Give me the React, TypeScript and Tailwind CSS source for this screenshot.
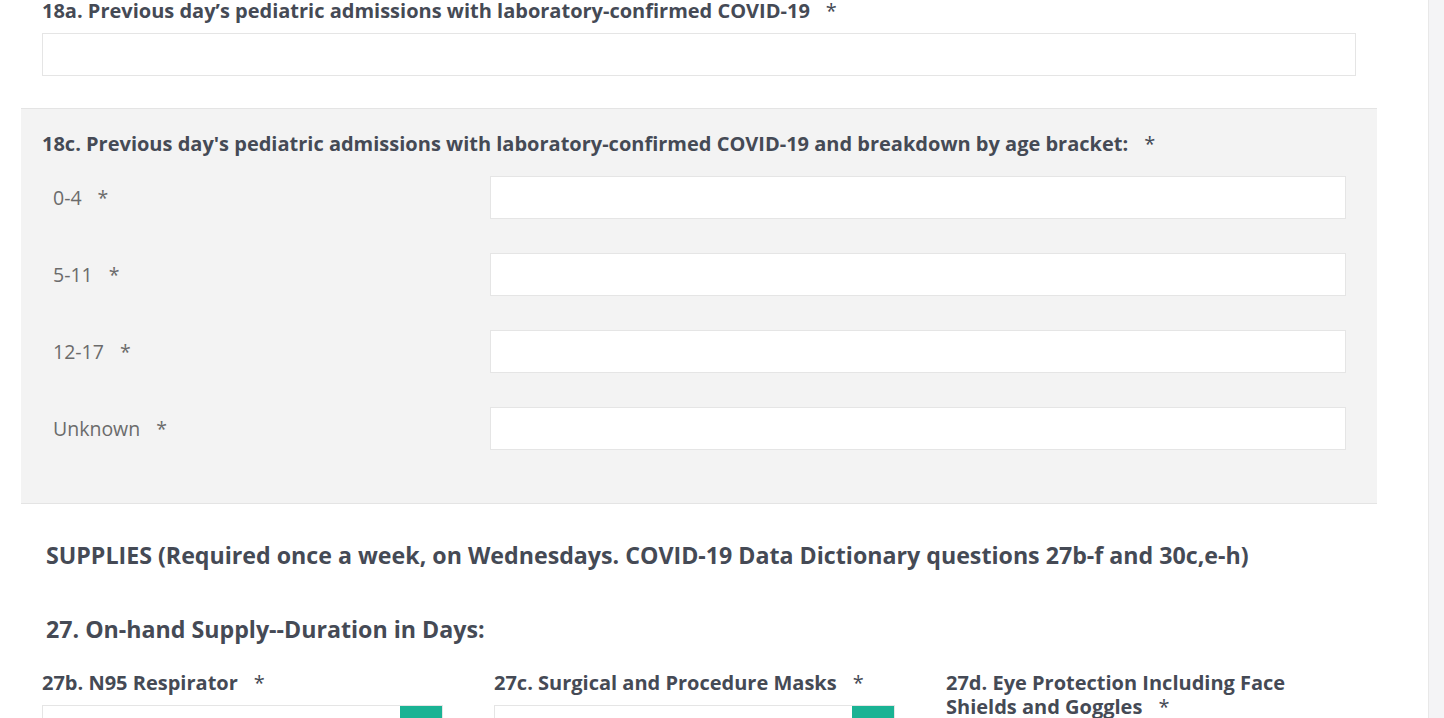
const ageRows = ['0-4', '5-11', '12-17', 'Unknown']

const supplyFields = [
  { id: '27b', label: '27b. N95 Respirator' },
  { id: '27c', label: '27c. Surgical and Procedure Masks' },
  { id: '27d', label: '27d. Eye Protection Including Face Shields and Goggles' },
]

function Req() {
  return <span className="ml-[16px] font-normal">*</span>
}

export default function App() {
  return (
    <div className="flex h-[718px] overflow-hidden bg-white font-['Open_Sans',sans-serif] text-[#454a55]">
      <div className="flex-1 pl-[21px] pr-[51px]">
        {/* 18a */}
        <div className="-mt-px pl-[21px] pr-[21px]">
          <label className="block text-[20px] font-bold leading-[24px]">
            18a. Previous day’s pediatric admissions with laboratory-confirmed COVID-19
            <Req />
          </label>
          <div className="mt-[10px] h-[43px] border border-[#e5e5e5] bg-white" />
        </div>

        {/* 18c gray block */}
        <div className="mt-[32px] h-[396px] border-y border-[#e4e4e4] bg-[#f3f3f3] pl-[21px] pr-[31px] pt-[22px]">
          <label className="block text-[20px] font-bold leading-[26px]">
            18c. Previous day's pediatric admissions with laboratory-confirmed COVID-19 and breakdown by age bracket:
            <Req />
          </label>
          <div className="mt-[19px] flex flex-col gap-[34px]">
            {ageRows.map((r) => (
              <div key={r} className="flex items-center">
                <div className="w-[448px] pl-[11px] text-[19.5px] text-[#6b6b6b]">
                  {r}
                  <span className="ml-[16px]">*</span>
                </div>
                <div className="h-[43px] flex-1 border border-[#e5e5e5] bg-white" />
              </div>
            ))}
          </div>
        </div>

        {/* Supplies */}
        <div className="pl-[25px] pt-[36px]">
          <h2 className="text-[23.2px] font-bold leading-[30px]">
            SUPPLIES (Required once a week, on Wednesdays. COVID-19 Data Dictionary questions 27b-f and 30c,e-h)
          </h2>
          <h2 className="mt-[44px] text-[23.2px] font-bold leading-[30px]">
            27. On-hand Supply--Duration in Days:
          </h2>
        </div>

        <div className="mt-[27px] grid grid-cols-[401px_401px_401px] gap-[51px] pl-[21px]">
          {supplyFields.map((f) => (
            <div key={f.id} className="w-[401px]">
              <label className="block text-[20px] font-bold leading-[24px]">
                {f.label}
                <Req />
              </label>
              {f.id !== '27d' && (
                <div className="mt-[10px] flex h-[43px] border border-[#e5e5e5] bg-white">
                  <div className="flex-1" />
                  <div className="w-[42px] bg-[#1ab394]" />
                </div>
              )}
            </div>
          ))}
        </div>
      </div>

      {/* scrollbar */}
      <div className="w-[16px] border-l border-[#e8e8e8] bg-[#f4f4f6]" />
    </div>
  )
}
